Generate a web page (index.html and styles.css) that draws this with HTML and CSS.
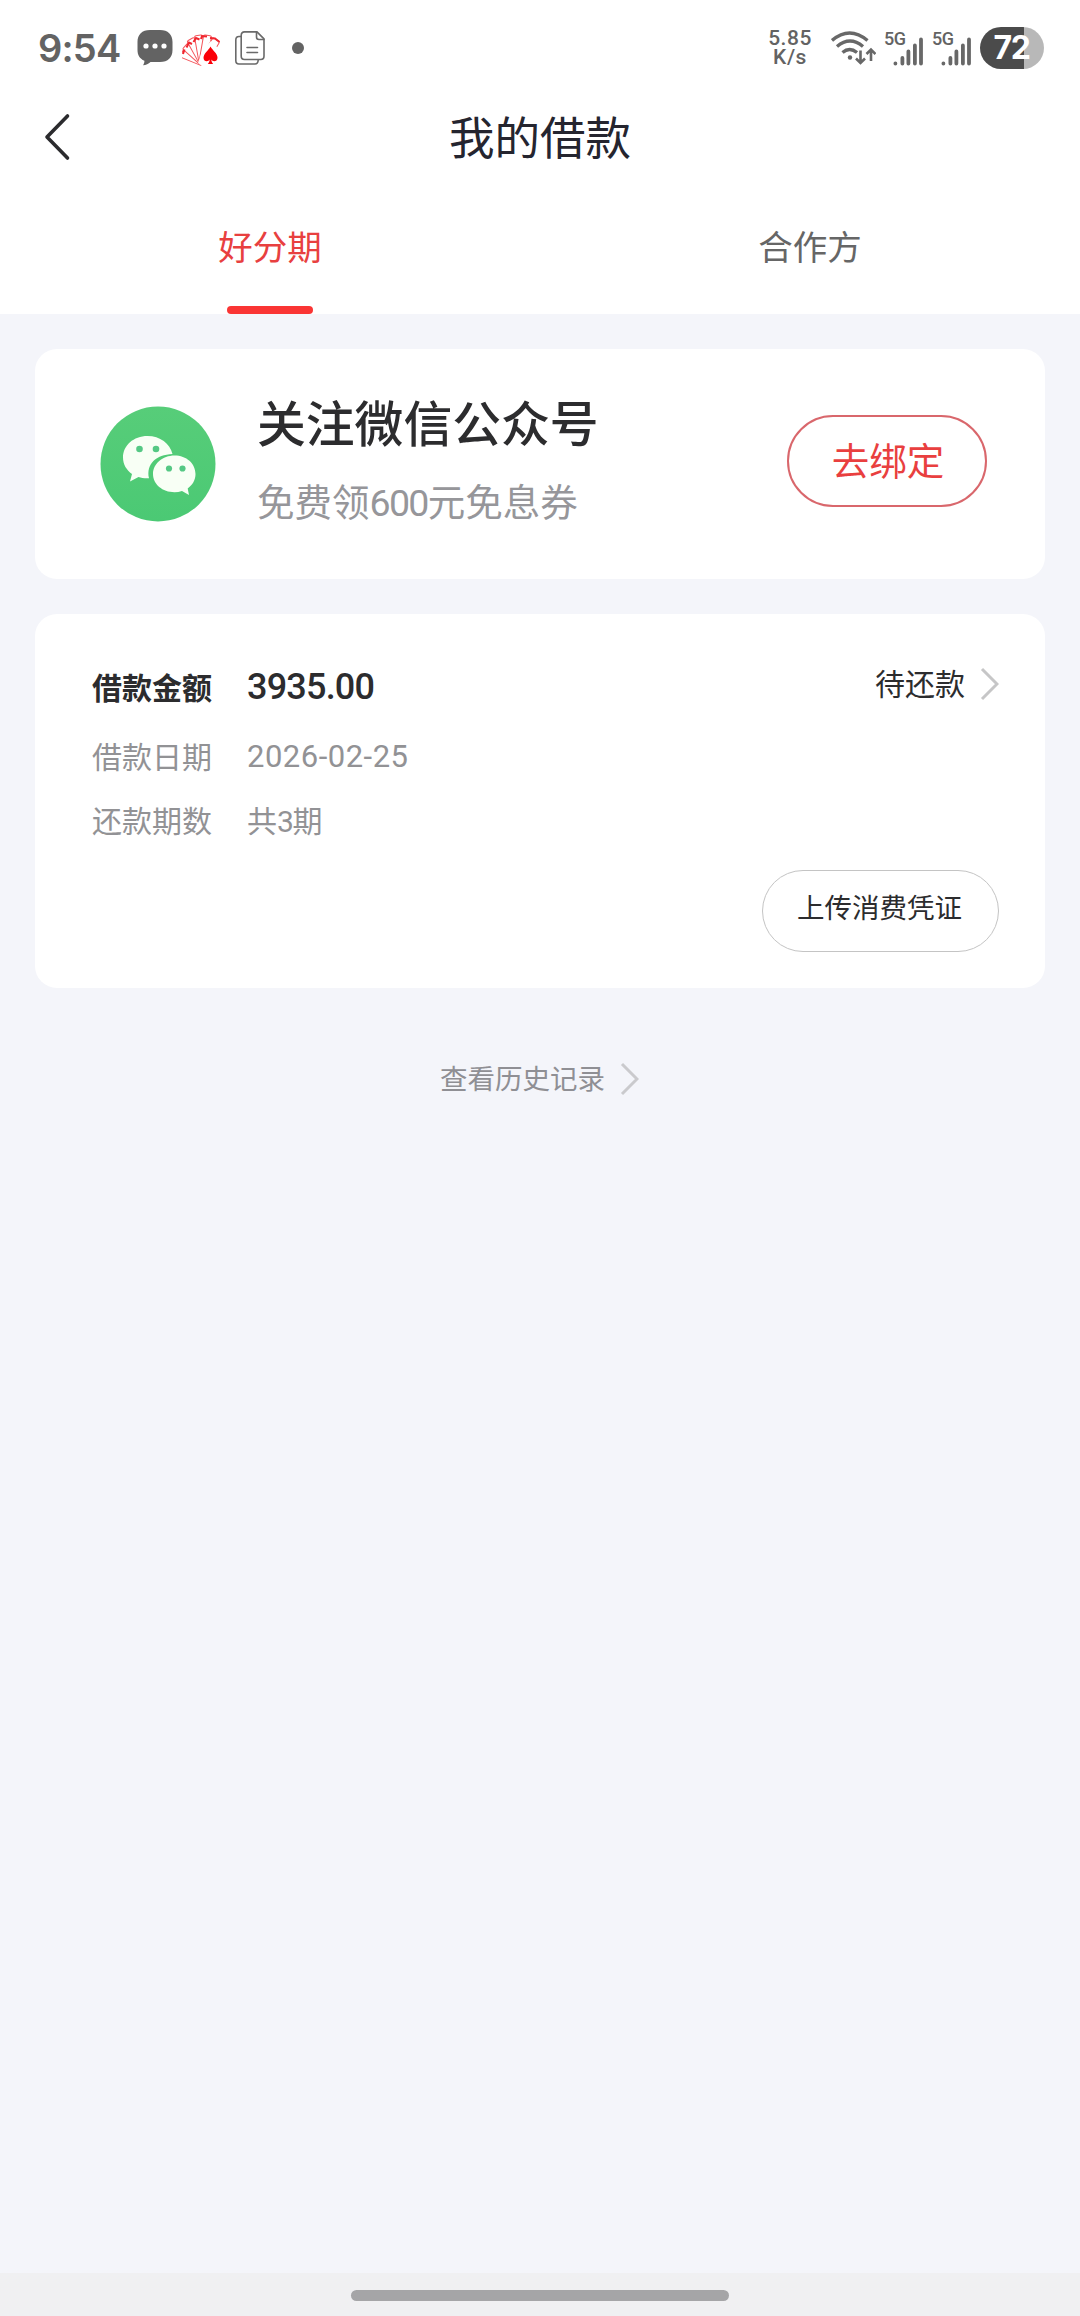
FILE: index.html
```html
<!DOCTYPE html>
<html lang="zh-CN">
<head>
<meta charset="utf-8">
<title>我的借款</title>
<link rel="stylesheet" href="styles.css">
</head>
<body>
<div class="screen">
  <div class="status">
    <span class="clock">9:54</span>
    <svg class="ic-chat" width="36" height="36" viewBox="0 0 36 36"><path d="M13 0h10c8 0 12.500 4.500 12.500 12v8c0 7.500-4.500 12-12.500 12H13.500c-2 1.800-4.500 3-7.500 3.300 1-1.500 1.500-3 1.400-4.500C2.500 28.500.5 25 .5 20v-8C.5 4.500 5 0 13 0z" fill="#636363"/><g fill="#fff"><circle cx="9" cy="16" r="2.600"/><circle cx="18" cy="16" r="2.600"/><circle cx="27" cy="16" r="2.600"/></g></svg>
    <svg class="ic-fan" width="40" height="32" viewBox="0 0 40 32"><g fill="#fff" stroke="#f4555b" stroke-width="1"><rect x="17" y="5" width="8" height="23" rx="1.500" transform="rotate(-68 21 28)"/><rect x="17" y="4" width="8" height="24" rx="1.500" transform="rotate(-48 21 28)"/><rect x="17" y="2" width="8" height="26" rx="1.500" transform="rotate(-29 21 28)"/><rect x="17" y="1" width="8" height="27" rx="1.500" transform="rotate(-10 21 28)"/><rect x="17" y="1" width="8" height="27" rx="1.500" transform="rotate(10 21 28)"/><rect x="17" y="2" width="8" height="26" rx="1.500" transform="rotate(31 21 28)"/></g><g fill="none" stroke="#f0262e" stroke-width="2"><path d="M1 20l1.500-4.500M4.500 13.500l2.500-5 3 1.500M11.500 8l2.500-4 3.500 1.500M19 5l1-3 5 .5M28 4l5 .5 4.500 3.500"/></g><path d="M29 7L40 18v14H20l-4-3 4-12z" fill="#fff"/><path d="M28.500 12.500c2 4 7 7 7 11.200 0 4-4.600 4.600-6.200 1.800.2 2 .8 3.300 1.900 4.500h-5.400c1.100-1.200 1.700-2.500 1.900-4.500-1.600 2.800-6.200 2.200-6.200-1.800 0-4.200 5-7.200 7-11.200z" fill="#fa0008"/></svg>
    <svg class="ic-doc" width="30" height="34" viewBox="0 0 30 34"><g fill="none" stroke="#6a6a6a" stroke-width="1.600" stroke-linejoin="round" stroke-linecap="round"><path d="M6 5.500H4Q.8 5.500.8 9v20.500q0 3.500 3.200 3.500h16q3 0 3.200-4"/><path d="M9.500.9H22l7 7V25q0 3.500-3.200 3.500H9.500Q6.200 28.500 6.200 25V4.400Q6.200.9 9.500.9z"/><path d="M21.500 1v5q0 2.500 2.500 2.500h5M12 16.500h10.500M12 21.500h10.500"/></g></svg>
    <svg class="ic-dot" width="12" height="12"><circle cx="6" cy="6" r="6" fill="#636363"/></svg>
    <span class="spacer"></span>
    <span class="speed"><span>5.85</span><span>K/s</span></span>
    <svg class="ic-wifi" width="45" height="34" viewBox="0 0 45 34"><g fill="none" stroke="#686868" stroke-width="3.400"><path d="M1 9.500Q18.500-5.500 36.500 9.500"/><path d="M6 15.500Q19 4.500 32 15.500"/><path d="M11.500 21.500Q18.500 15.500 26 21.500"/></g><circle cx="19" cy="26.500" r="2.200" fill="#686868"/><g fill="none" stroke="#686868" stroke-width="2.600"><path d="M29.500 19.500v12.500M25 27.500l4.500 4.500 4.500-4.500M40 30V18M35.500 23l4.500-4.500 4.500 4.500"/></g></svg>
    <span class="cell"><span class="gen">5G</span><svg width="30" height="29" viewBox="0 0 30 29"><g stroke="#686868" stroke-width="3.800" stroke-linecap="round"><path d="M2.400 26.500v.1M9.400 21v5.500M15.400 14.500v12M21.900 8.500v18M28 2.500v24"/></g></svg></span>
    <span class="cell"><span class="gen">5G</span><svg width="30" height="29" viewBox="0 0 30 29"><g stroke="#686868" stroke-width="3.800" stroke-linecap="round"><path d="M2.400 26.500v.1M9.400 21v5.500M15.400 14.500v12M21.900 8.500v18M28 2.500v24"/></g></svg></span>
    <span class="battery">72</span>
  </div>

  <header class="nav">
    <svg class="back" width="28" height="48" viewBox="0 0 28 48"><path d="M24.500 3L4 24l20.500 21" fill="none" stroke="#2b2b2e" stroke-width="3.600" stroke-linecap="round" stroke-linejoin="round"/></svg>
    <h1 class="title">我的借款</h1>
  </header>
  <nav class="tabs">
    <div class="tab active"><span>好分期</span></div>
    <div class="tab"><span>合作方</span></div>
  </nav>

  <main class="content">
    <section class="card follow">
      <svg class="wechat" width="116" height="116" viewBox="0 0 116 116"><defs><linearGradient id="g" x1="0" y1="0" x2="0" y2="1"><stop offset="0" stop-color="#57cd79"/><stop offset="1" stop-color="#4bc974"/></linearGradient></defs><circle cx="58" cy="58" r="57.500" fill="url(#g)"/><path d="M47.500 30C33.500 30 23 39.500 23 51.500c0 7 3.500 12.500 9 16.500l-2 7.500 8.500-4.500c3 1 7 1.500 10.500 1.200-3-14 7-23.500 23.500-24.200C70 37.500 60 30 47.500 30z" fill="#f8fff5"/><path d="M74.500 49.500c12 0 21 8 21 18.500 0 6-3 11-7.800 14.500l1.300 6.500-7-4c-2.500.8-5 1.200-7.500 1.200-12 0-21.500-8-21.500-18.200s9.500-18.500 21.500-18.500z" fill="#f8fff5"/><g fill="#55c884"><circle cx="39.500" cy="43" r="3.300"/><circle cx="56" cy="43" r="3.300"/><circle cx="69" cy="62.500" r="3.100"/><circle cx="82.500" cy="62.500" r="3.100"/></g></svg>
      <div class="follow-text">
        <div class="follow-title">关注微信公众号</div>
        <div class="follow-sub">免费领<span class="num">600</span>元免息券</div>
      </div>
      <div class="bind">去绑定</div>
    </section>

    <section class="card loan">
      <div class="row first">
        <span class="label">借款金额</span><span class="amount">3935.00</span>
        <span class="state">待还款</span>
        <svg class="chev" width="19" height="34" viewBox="0 0 19 34"><path d="M2 2l15 15L2 32" fill="none" stroke="#c6c6c7" stroke-width="3"/></svg>
      </div>
      <div class="row date"><span class="label">借款日期</span><span class="value day">2026-02-25</span></div>
      <div class="row terms"><span class="label">还款期数</span><span class="value">共<span class="num">3</span>期</span></div>
      <div class="upload">上传消费凭证</div>
    </section>

    <div class="history">
      <span>查看历史记录</span>
      <svg class="chev" width="19" height="34" viewBox="0 0 19 34"><path d="M2 2l15 15L2 32" fill="none" stroke="#cacacd" stroke-width="3"/></svg>
    </div>
  </main>

  <footer class="gesture"><div class="handle"></div></footer>
</div>
</body>
</html>
```
FILE: styles.css
```css
* { box-sizing: border-box; }
body { margin: 0; font-family: Roboto, "Noto Sans CJK SC", sans-serif; color: #2c2c2e; }
svg { display: block; flex: none; }
.screen { width: 1080px; height: 2316px; display: flex; flex-direction: column; background: #f4f5fa; overflow: hidden; }

.status { height: 96px; background: #fff; display: flex; align-items: center; padding: 0 36px 0 38px; color: #636363; }
.clock { font: 600 38px/98px Inter, sans-serif; letter-spacing: -.8px; width: 99px; white-space: nowrap; }
.ic-chat { margin-right: 9px; }
.ic-fan { margin: 3px 13px 0 0; }
.ic-doc { margin-right: 27px; }
.spacer { flex: 1; }
.speed { display: flex; flex-direction: column; align-items: center; width: 44px; font-size: 21px; font-weight: 500; line-height: 19px; letter-spacing: .5px; margin-right: 19px; }
.ic-wifi { margin-right: 8px; }
.cell { display: flex; flex: none; width: 48px; height: 35px; align-items: flex-end; position: relative; padding-left: 9px; }
.gen { position: absolute; left: 0; top: 0; font-size: 18px; font-weight: 500; line-height: 16px; letter-spacing: -.5px; }
.battery { flex: none; width: 64px; height: 42px; border-radius: 21px; background: linear-gradient(90deg, #4b4b4b 44px, #b8b8b8 44px); color: #fff; font: 700 32px/42px Inter, sans-serif; letter-spacing: -1.500px; text-align: center; padding-right: 1px; }

.nav { height: 84px; background: #fff; display: grid; grid-template-columns: 120px 1fr 120px; align-items: center; }
.back { margin-left: 43px; margin-top: -2px; }
.title { margin: 0; text-align: center; font-size: 45.500px; line-height: 84px; padding-top: 2px; height: 84px; font-weight: 400; color: #25252f; }
.tabs { height: 134px; background: #fff; display: grid; grid-template-columns: 1fr 1fr; }
.tab { display: flex; flex-direction: column; align-items: center; justify-content: space-between; font-size: 34.500px; line-height: 136px; color: #666; }
.tab span { height: 126px; }
.active { color: #e8403f; }
.active::after { content: ""; width: 86px; height: 8px; border-radius: 4px; background: #fa3534; }

.content { flex: 1; padding: 35px; display: flex; flex-direction: column; }
.card { background: #fff; border-radius: 22px; margin-bottom: 35px; }
.follow { height: 230px; display: flex; align-items: flex-start; padding: 0 58px 0 65px; }
.wechat { margin-top: 57px; }
.follow-text { flex: 1; margin-left: 41px; padding-top: 41px; white-space: nowrap; }
.follow-title { font-size: 48.800px; line-height: 72px; font-weight: 500; }
.follow-sub { margin-top: 13px; font-size: 37.500px; line-height: 56px; color: #96969a; }
.follow-sub .num { letter-spacing: -1.700px; }
.bind { margin-top: 66px; width: 200px; height: 92px; border: 2px solid #d9676c; border-radius: 46px; color: #e93f3f; font-size: 37.500px; line-height: 90px; text-align: center; padding-left: 2px; }

.loan { height: 374px; padding: 40px 46px 36px 57px; display: flex; flex-direction: column; }
.row { display: flex; align-items: center; font-size: 30px; color: #929295; }
.label { width: 155px; }
.first { height: 66px; color: #2c2c2e; }
.first .label { font-weight: 700; padding-bottom: 2px; }
.amount { font-size: 36px; font-weight: 500; letter-spacing: -.8px; flex: 1; }
.state { margin-right: 15px; padding-bottom: 11px; }
.first .chev { margin-bottom: 6px; }
.date { height: 70px; }
.day { font-size: 31px; letter-spacing: .5px; padding-top: 2px; }
.terms { height: 58px; }
.terms .num { letter-spacing: -1.500px; }
.upload { align-self: flex-end; margin-top: 22px; width: 237px; height: 82px; border: 1px solid #c4c4c4; border-radius: 41px; font-size: 27.500px; line-height: 76px; text-align: center; padding-right: 2px; }
.history { display: flex; justify-content: center; align-items: center; gap: 15px; height: 60px; margin-top: 26px; padding-right: 1px; font-size: 27.500px; color: #8f8f94; }
.history span { padding-bottom: 5px; }

.gesture { height: 43px; background: #f0f0f2; padding-top: 17px; }
.handle { width: 378px; height: 11px; margin: 0 auto; border-radius: 6px; background: #a5a5a7; }
```
